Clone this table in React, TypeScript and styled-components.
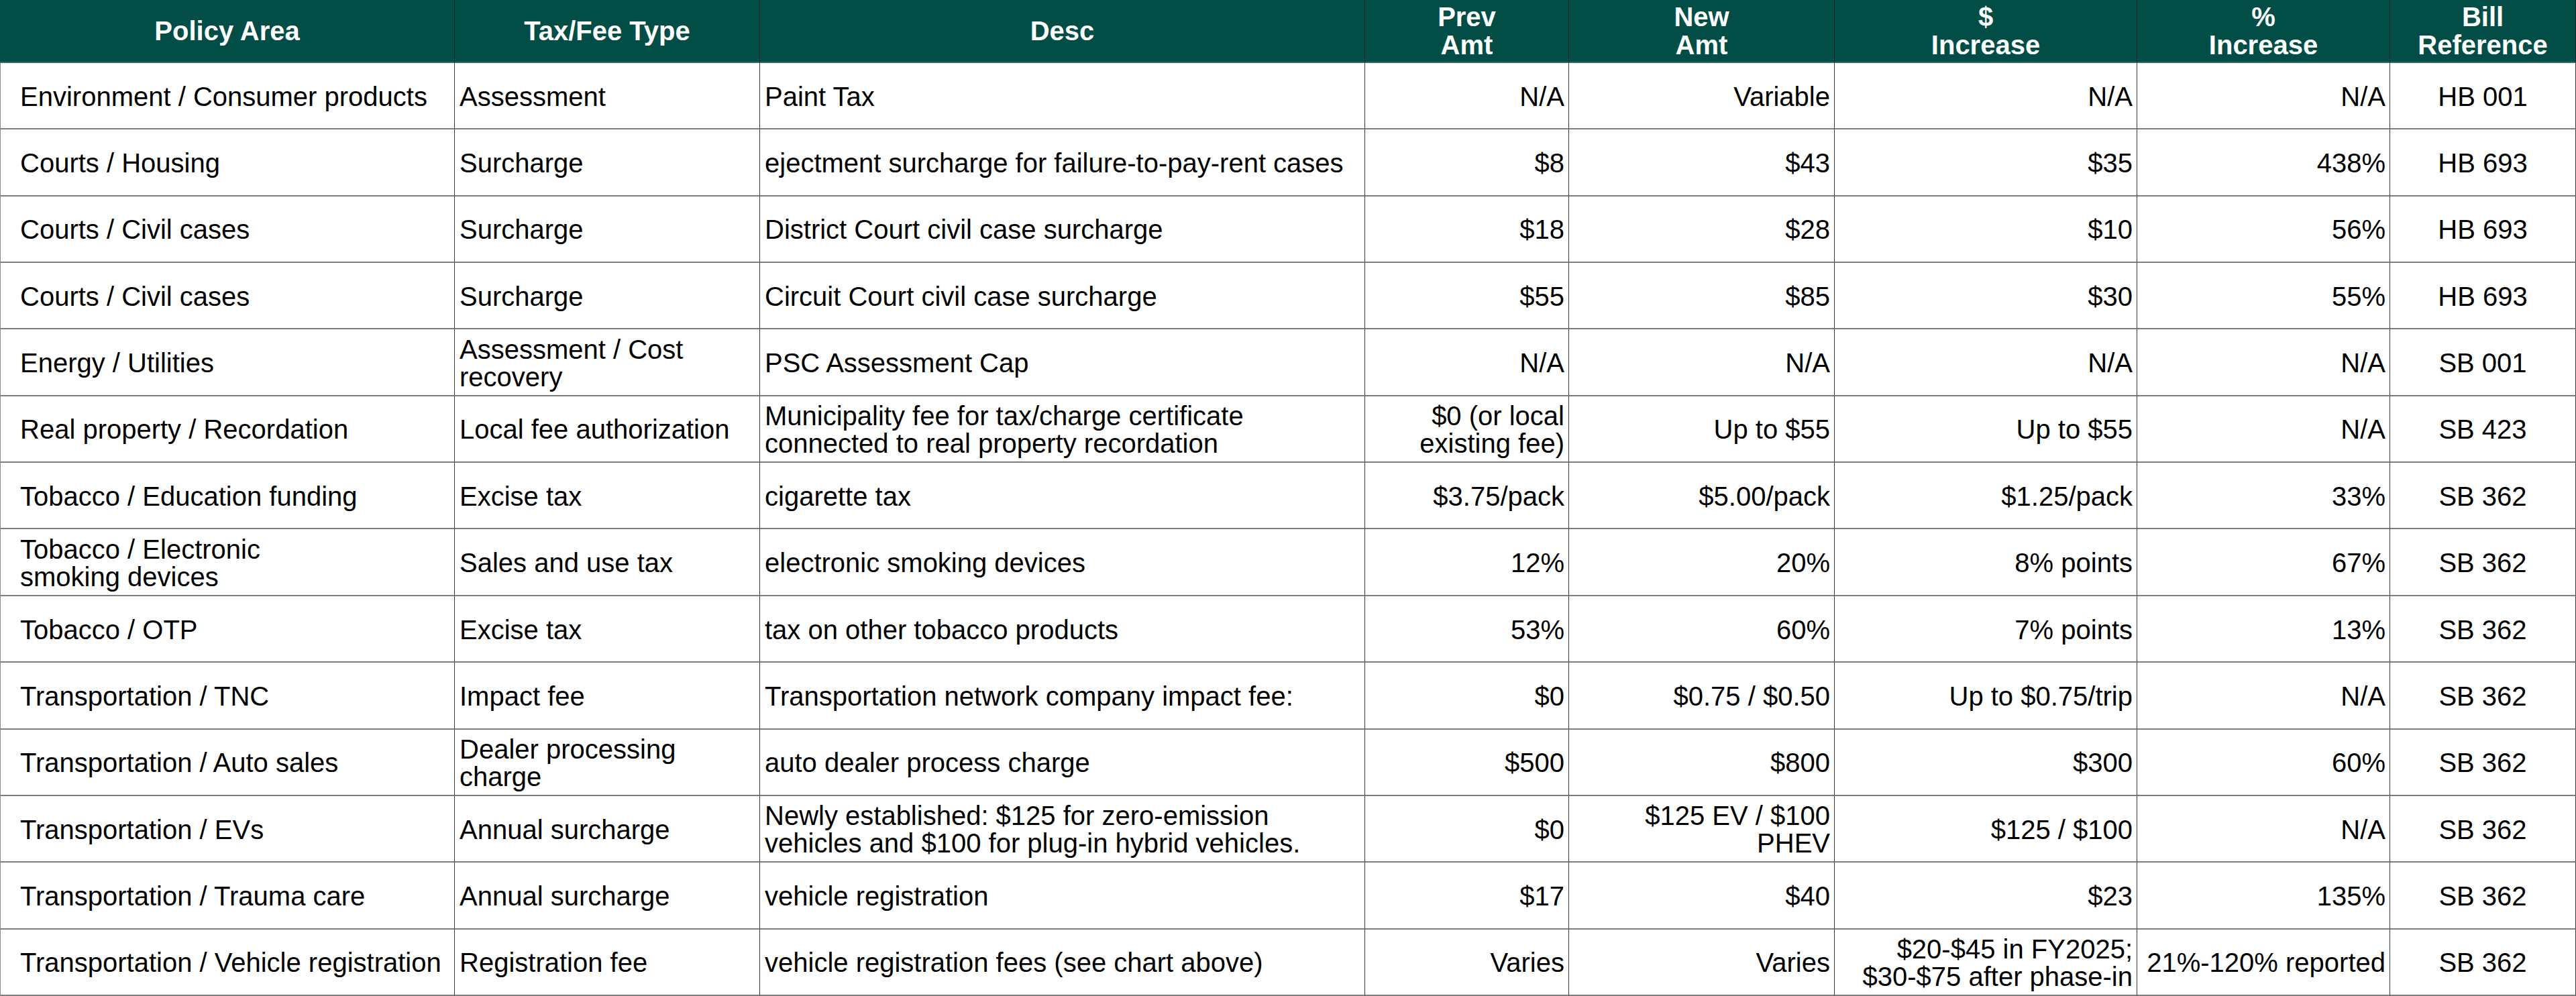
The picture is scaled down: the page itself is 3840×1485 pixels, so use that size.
import styled, { createGlobalStyle } from 'styled-components';

type Align = 'left' | 'right' | 'center';

const GlobalStyle = createGlobalStyle`
  html, body {
    margin: 0;
    padding: 0;
    background: #fff;
  }
  body {
    font-family: "Liberation Sans", Arial, sans-serif;
  }
`;

// column widths taken from the sheet, borders included
const widths = [678, 455, 902, 304, 396, 451, 377, 277];
const aligns: Align[] = ['left', 'left', 'left', 'right', 'right', 'right', 'right', 'center'];

const headers = [
  'Policy Area',
  'Tax/Fee Type',
  'Desc',
  'Prev\nAmt',
  'New\nAmt',
  '$\nIncrease',
  '%\nIncrease',
  'Bill\nReference',
];

const rows: string[][] = [
  ['Environment / Consumer products', 'Assessment', 'Paint Tax', 'N/A', 'Variable', 'N/A', 'N/A', 'HB 001'],
  ['Courts / Housing', 'Surcharge', 'ejectment surcharge for failure-to-pay-rent cases', '$8', '$43', '$35', '438%', 'HB 693'],
  ['Courts / Civil cases', 'Surcharge', 'District Court civil case surcharge', '$18', '$28', '$10', '56%', 'HB 693'],
  ['Courts / Civil cases', 'Surcharge', 'Circuit Court civil case surcharge', '$55', '$85', '$30', '55%', 'HB 693'],
  ['Energy / Utilities', 'Assessment / Cost\nrecovery', 'PSC Assessment Cap', 'N/A', 'N/A', 'N/A', 'N/A', 'SB 001'],
  [
    'Real property / Recordation',
    'Local fee authorization',
    'Municipality fee for tax/charge certificate\nconnected to real property recordation',
    '$0 (or local\nexisting fee)',
    'Up to $55',
    'Up to $55',
    'N/A',
    'SB 423',
  ],
  ['Tobacco / Education funding', 'Excise tax', 'cigarette tax', '$3.75/pack', '$5.00/pack', '$1.25/pack', '33%', 'SB 362'],
  ['Tobacco / Electronic\nsmoking devices', 'Sales and use tax', 'electronic smoking devices', '12%', '20%', '8% points', '67%', 'SB 362'],
  ['Tobacco / OTP', 'Excise tax', 'tax on other tobacco products', '53%', '60%', '7% points', '13%', 'SB 362'],
  ['Transportation / TNC', 'Impact fee', 'Transportation network company impact fee:', '$0', '$0.75 / $0.50', 'Up to $0.75/trip', 'N/A', 'SB 362'],
  ['Transportation / Auto sales', 'Dealer processing\ncharge', 'auto dealer process charge', '$500', '$800', '$300', '60%', 'SB 362'],
  [
    'Transportation / EVs',
    'Annual surcharge',
    'Newly established: $125 for zero-emission\nvehicles and $100 for plug-in hybrid vehicles.',
    '$0',
    '$125 EV / $100\nPHEV',
    '$125 / $100',
    'N/A',
    'SB 362',
  ],
  ['Transportation / Trauma care', 'Annual surcharge', 'vehicle registration', '$17', '$40', '$23', '135%', 'SB 362'],
  [
    'Transportation / Vehicle registration',
    'Registration fee',
    'vehicle registration fees (see chart above)',
    'Varies',
    'Varies',
    '$20-$45 in FY2025;\n$30-$75 after phase-in',
    '21%-120% reported',
    'SB 362',
  ],
];

const Sheet = styled.div`
  display: grid;
  grid-template-columns: ${widths.map((w) => `${w}px`).join(' ')};
  grid-template-rows: 94px repeat(${rows.length}, 1fr);
  width: 3840px;
  height: 1485px;
  font-family: "Liberation Sans", Arial, sans-serif;
  font-size: 40px;
  color: #000;
  background: #fff;
`;

const Row = styled.div`
  display: contents;
`;

const justify = (a: Align) => (a === 'left' ? 'flex-start' : a === 'right' ? 'flex-end' : 'center');

const HeadCell = styled.div`
  display: flex;
  align-items: center;
  justify-content: center;
  box-sizing: border-box;
  padding: 0 6px;
  background: #024e47;
  color: #fff;
  font-weight: 700;
  line-height: 42px;
  text-align: center;
  white-space: pre-line;
  border-right: 1px solid #0d2623;
  border-bottom: 2px solid #2f6d66;
`;

const Cell = styled.div<{ $align: Align; $first?: boolean }>`
  display: flex;
  align-items: center;
  justify-content: ${(p) => justify(p.$align)};
  box-sizing: border-box;
  padding: 3px ${(p) => (p.$align === 'right' ? '6px' : '7px')} 0 ${(p) => (p.$first ? '29px' : '7px')};
  line-height: 41px;
  text-align: ${(p) => p.$align};
  white-space: pre-line;
  border-right: 1px solid #3a3a3a;
  border-bottom: 2px solid #7d7d7d;
  ${(p) => p.$first && 'border-left: 1px solid #8a8a8a;'}
`;

export default function App() {
  return (
    <>
      <GlobalStyle />
      <Sheet>
        <Row>
          {headers.map((h, i) => (
            <HeadCell key={i}>{h}</HeadCell>
          ))}
        </Row>
        {rows.map((r, ri) => (
          <Row key={ri}>
            {r.map((text, ci) => (
              <Cell key={ci} $align={aligns[ci]} $first={ci === 0}>
                {text}
              </Cell>
            ))}
          </Row>
        ))}
      </Sheet>
    </>
  );
}
